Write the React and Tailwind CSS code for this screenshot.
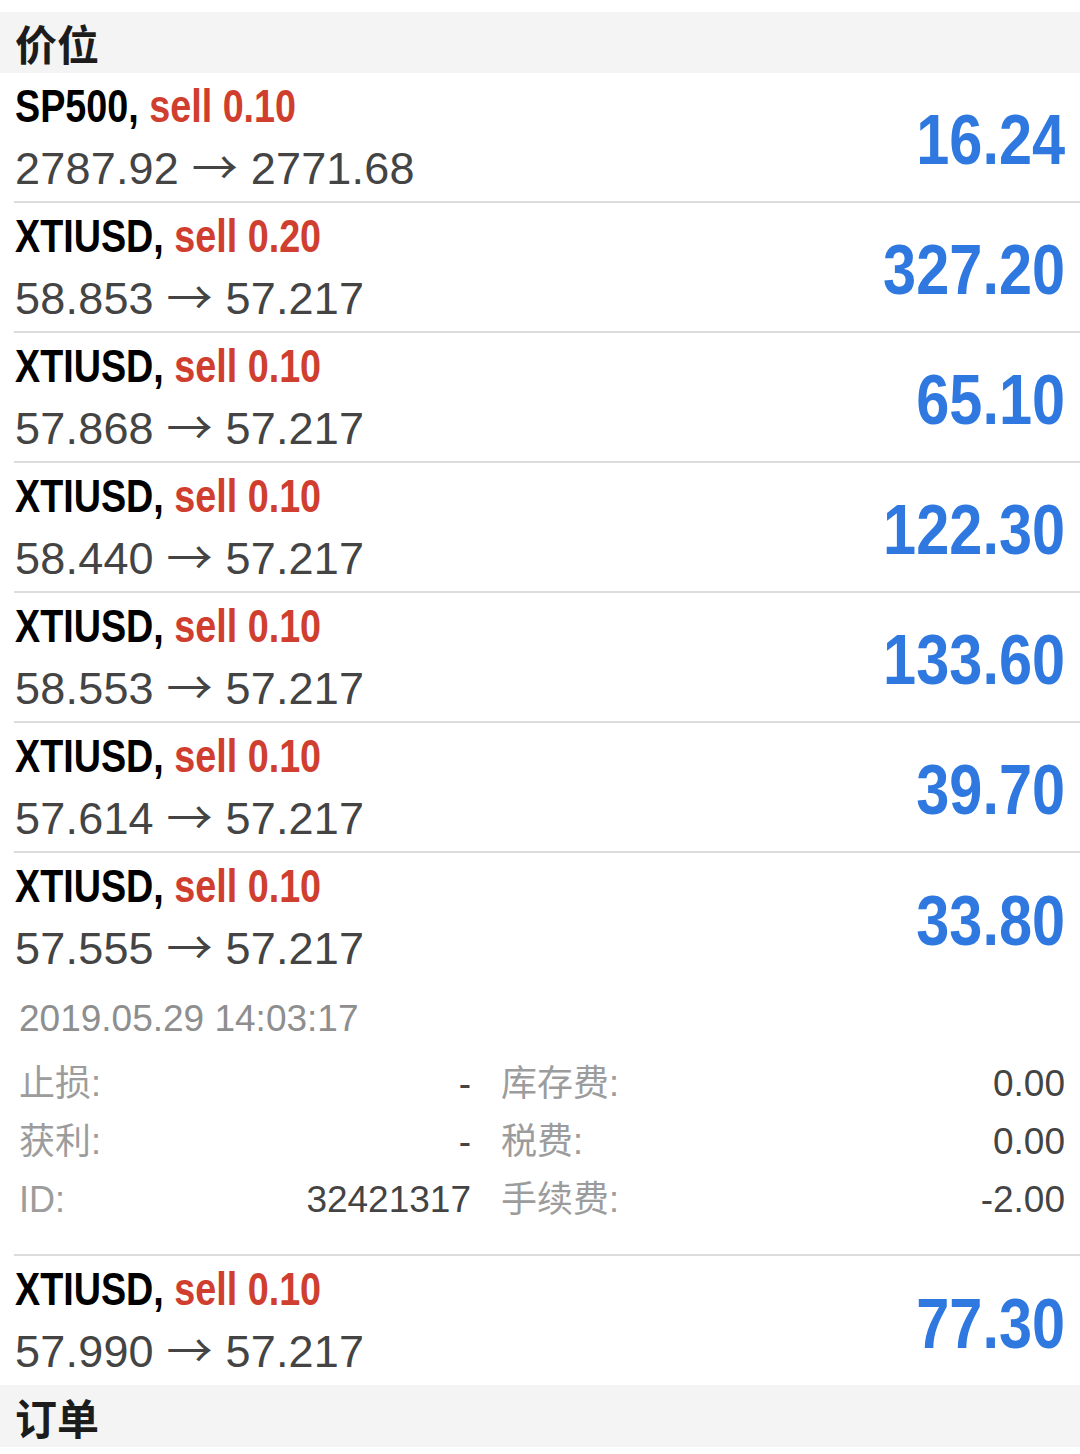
import React from "react";

const rows = [
  { sym: "SP500", lot: "0.10", from: "2787.92", to: "2771.68", pl: "16.24" },
  { sym: "XTIUSD", lot: "0.20", from: "58.853", to: "57.217", pl: "327.20" },
  { sym: "XTIUSD", lot: "0.10", from: "57.868", to: "57.217", pl: "65.10" },
  { sym: "XTIUSD", lot: "0.10", from: "58.440", to: "57.217", pl: "122.30" },
  { sym: "XTIUSD", lot: "0.10", from: "58.553", to: "57.217", pl: "133.60" },
  { sym: "XTIUSD", lot: "0.10", from: "57.614", to: "57.217", pl: "39.70" },
  { sym: "XTIUSD", lot: "0.10", from: "57.555", to: "57.217", pl: "33.80", expanded: true },
  { sym: "XTIUSD", lot: "0.10", from: "57.990", to: "57.217", pl: "77.30" },
];

function Main({ r, h }) {
  return (
    <div className={"flex items-center justify-between pr-[15px] " + h}>
      <div className="flex flex-col pt-[3px] self-start">
        <div className="h-[60px] leading-[60px] whitespace-nowrap">
          <span className="inline-block origin-left scale-x-[0.82] text-[46px] font-bold font-['Liberation_Sans',sans-serif]">
            <span className="text-black">{r.sym}, </span>
            <span className="text-[#cf3e2e]">sell {r.lot}</span>
          </span>
        </div>
        <div className="h-[57px] leading-[57px] text-[45px] text-[#444444] font-['Liberation_Sans',sans-serif] whitespace-nowrap tracking-[0.2px]">
          {r.from}{" "}
          <span className="font-['Noto_Sans_CJK_SC',sans-serif] text-[46px]">→</span>{" "}
          {r.to}
        </div>
      </div>
      <div className="pt-[6px] origin-right scale-x-[0.85] text-[70px] leading-none font-bold text-[#2e78e0] font-['Liberation_Sans',sans-serif]">
        {r.pl}
      </div>
    </div>
  );
}

function Details() {
  const cell = "flex h-[58px] items-center justify-between";
  const lab = "text-[36px] text-[#9c9c9c] font-['Liberation_Sans','Noto_Sans_CJK_SC',sans-serif]";
  const val = "text-[37px] text-[#444444] font-['Liberation_Sans',sans-serif]";
  const left = [
    ["止损:", "-"],
    ["获利:", "-"],
    ["ID:", "32421317"],
  ];
  const right = [
    ["库存费:", "0.00"],
    ["税费:", "0.00"],
    ["手续费:", "-2.00"],
  ];
  return (
    <div className="pr-[15px] pl-[4px] pb-[25px]">
      <div className="flex h-[72px] items-center text-[37px] text-[#8e8e8e] font-['Liberation_Sans',sans-serif]">
        2019.05.29 14:03:17
      </div>
      <div className="grid grid-cols-[452px_1fr] gap-x-[30px]">
        {left.map((l, i) => (
          <React.Fragment key={i}>
            <div className={cell}>
              <span className={lab}>{l[0]}</span>
              <span className={val}>{l[1]}</span>
            </div>
            <div className={cell}>
              <span className={lab}>{right[i][0]}</span>
              <span className={val}>{right[i][1]}</span>
            </div>
          </React.Fragment>
        ))}
      </div>
    </div>
  );
}

export default function App() {
  return (
    <div className="flex flex-col w-[1080px] h-[1454px] bg-white overflow-hidden pt-[12px] font-['Liberation_Sans',sans-serif]">
      <div className="flex shrink-0 h-[61px] items-center bg-[#f4f4f5] px-[15px] text-[42px] font-bold text-[#1c1c1c] font-['Noto_Sans_CJK_SC',sans-serif]">
        价位
      </div>
      {rows.map((r, i) => {
        const last = i === rows.length - 1;
        return (
          <div
            key={i}
            className={
              "shrink-0 ml-[14px] pl-[1px] " +
              (last ? "" : "border-b-2 border-[#dcdcdc]")
            }
          >
            <Main r={r} h={last ? "h-[129px]" : r.expanded ? "h-[130px]" : "h-[128px]"} />
            {r.expanded && <Details />}
          </div>
        );
      })}
      <div className="flex shrink-0 h-[62px] items-center bg-[#f4f4f5] px-[15px] text-[42px] font-bold text-[#1c1c1c] font-['Noto_Sans_CJK_SC',sans-serif]">
        订单
      </div>
    </div>
  );
}
